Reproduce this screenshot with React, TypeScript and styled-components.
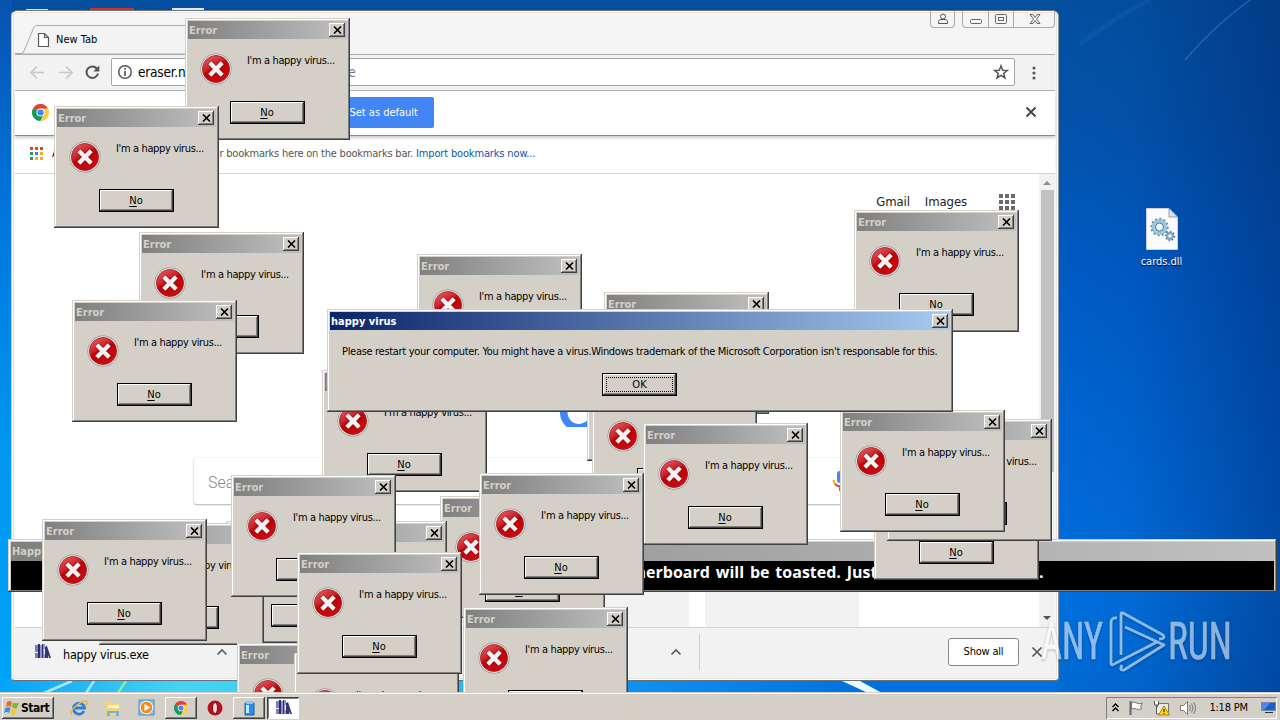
import React from 'react'
import styled, { createGlobalStyle } from 'styled-components'

const errors = [
    { x: 587, y: 339 },
    { x: 604, y: 292 },
    { x: 592, y: 385 },
    { x: 185, y: 18 },
    { x: 54, y: 106 },
    { x: 139, y: 232 },
    { x: 72, y: 300 },
    { x: 417, y: 254 },
    { x: 854, y: 210 },
    { x: 322, y: 370 },
    { x: 643, y: 423 },
    { x: 874, y: 458 },
    { x: 887, y: 419 },
    { x: 840, y: 410 },
    { x: 440, y: 496 },
    { x: 282, y: 521 },
    { x: 226, y: 521 },
    { x: 99, y: 523 },
    { x: 42, y: 519 },
    { x: 231, y: 475 },
    { x: 479, y: 473 },
    { x: 237, y: 643 },
    { x: 294, y: 653 },
    { x: 297, y: 552 },
    { x: 463, y: 607 },
]

const ErrorIcon = () => (
    <svg width="32" height="32" viewBox="0 0 32 32">
        <defs>
            <linearGradient id="red" x1="0" y1="0" x2="0.6" y2="1">
                <stop offset="0" stopColor="#e8696b" />
                <stop offset="0.45" stopColor="#cc2229" />
                <stop offset="0.55" stopColor="#bd0008" />
                <stop offset="1" stopColor="#c80d10" />
            </linearGradient>
        </defs>
        <circle cx="16" cy="16" r="15.5" fill="#8f8f8f" />
        <circle cx="16" cy="16" r="14.8" fill="#f1eeee" />
        <circle cx="16" cy="16" r="13.6" fill="url(#red)" stroke="#a3161a" strokeWidth="0.7" />
        <path d="M9.500 9.500l13 13M22.500 9.500l-13 13" stroke="#8c0a0e" strokeWidth="5.6" />
        <path d="M9.800 9.800l12.400 12.400M22.200 9.800l-12.400 12.400" stroke="#f3f1f1" strokeWidth="4.4" />
    </svg>
)

const CloseGlyph = () => (
    <svg width="9" height="8" viewBox="0 0 9 8">
        <path d="M1 0.500l7 7M8 0.500l-7 7" stroke="#000" strokeWidth="1.6" />
    </svg>
)

const ChromeLogo = ({ size }: { size: number }) => (
    <svg width={size} height={size} viewBox="0 0 18 18">
        <path d="M9 9L1.2 4.5A9 9 0 0 1 16.8 4.5Z" fill="#db4437" />
        <path d="M9 9L1.2 4.5A9 9 0 0 0 9 18L12.5 11Z" fill="#0f9d58" />
        <path d="M9 9L9 4.8H17A9 9 0 0 1 9 18L12.6 11Z" fill="#ffcd40" />
        <circle cx="9" cy="9" r="4.3" fill="#f5f5f5" />
        <circle cx="9" cy="9" r="3.3" fill="#4285f4" />
    </svg>
)

const VirusIcon = () => (
    <svg width="17" height="17" viewBox="0 0 17 17">
        <path d="M1 2h3v13H1z" fill="#7d80b8" />
        <path d="M4 1h2v14H4zM8 1h1v14H8z" fill="#2b2b70" />
        <path d="M6 2h2v13H6zM9 1h2v14H9z" fill="#9294c4" />
        <path d="M11 4l2-1 4 12h-2l-1-3v3h-3z" fill="#34347c" />
        <path d="M1 9h3v1H1zM10 6h1v5h-1z" fill="#fff" />
    </svg>
)

function ErrorDialog({ x, y }: { x: number; y: number }) {
    return (
        <Window style={{ left: x, top: y }}>
            <TitleBar>
                <span>Error</span>
                <CloseButton><CloseGlyph /></CloseButton>
            </TitleBar>
            <ErrorBody>
                <ErrorIcon />
                <Message>I'm a happy virus...</Message>
            </ErrorBody>
            <ButtonRow>
                <DialogButton><u>N</u>o</DialogButton>
            </ButtonRow>
        </Window>
    )
}

function Browser() {
    return (
        <BrowserFrame>
            <BrowserTop>
                <svg width="210" height="29" viewBox="0 0 210 29">
                    <path d="M0 28.5H6.500Q8 28.500 9 26L19 2Q20 0.500 22 0.500H210V29H0Z" fill="#f3f3f3" stroke="#a9abac" />
                    <path d="M23.500 8.500h6l4 4v9h-10zM29.500 8.500v4h4" fill="#fff" stroke="#5a5a5a" strokeWidth="1.200" />
                </svg>
                <TabTitle>New Tab</TabTitle>
                <Caption>
                    <CaptionBox>
                        <svg width="12" height="12" viewBox="0 0 12 12" fill="none" stroke="#555">
                            <circle cx="6" cy="3.500" r="2.500" />
                            <path d="M1.500 10.500V8.500Q2 6.500 4 6.500H8Q10 6.500 10.500 8.500V10.500Z" />
                        </svg>
                    </CaptionBox>
                    <CaptionGroup>
                        <svg width="92" height="17" viewBox="0 0 92 17" fill="none" stroke="#666">
                            <path d="M25.500 0V17M50.500 0V17" stroke="#aaa" />
                            <rect x="7.500" y="8.500" width="11" height="4" rx="1" />
                            <rect x="32.500" y="3.500" width="11" height="9" rx="1" />
                            <rect x="35.500" y="6.500" width="5" height="3" />
                            <path d="M67 3.500h3l2 3 2-3h3l-3.500 4.500 3.500 4.500h-3l-2-3-2 3h-3l3.500-4.500z" />
                        </svg>
                    </CaptionGroup>
                </Caption>
            </BrowserTop>
            <Toolbar>
                <svg width="96" height="36" viewBox="0 0 96 36" fill="none" stroke="#c8c8c8" strokeWidth="1.700">
                    <path d="M29 17.500H16.500M22 11.500l-6 6 6 6M44 17.500H56.500M51 11.500l6 6-6 6" />
                    <path d="M81.800 13.500A5.800 5.800 0 1 0 83 18.500" stroke="#555" strokeWidth="2" />
                    <path d="M84.300 10.500v6h-6z" fill="#555" stroke="none" />
                </svg>
                <Omnibox>
                    <svg width="16" height="16" viewBox="0 0 16 16">
                        <circle cx="8" cy="8" r="6.300" fill="none" stroke="#555" strokeWidth="1.500" />
                        <path d="M8 7v5M8 4v1.700" stroke="#555" strokeWidth="1.700" />
                    </svg>
                    <Url>eraser.n</Url>
                    <UrlTail>e</UrlTail>
                    <svg width="16" height="16" viewBox="0 0 16 16">
                        <path d="M8 1.800l1.700 4.400 4.700.2-3.700 3 1.300 4.600L8 11.400 4 14l1.300-4.600-3.700-3 4.700-.2z" fill="none" stroke="#555" strokeWidth="1.500" />
                    </svg>
                </Omnibox>
                <svg width="4" height="14" viewBox="0 0 4 14" fill="#5a5a5a">
                    <circle cx="2" cy="2" r="1.600" /><circle cx="2" cy="7" r="1.600" /><circle cx="2" cy="12" r="1.600" />
                </svg>
            </Toolbar>
            <InfoBar>
                <ChromeLogo size={17} />
                <DefaultButton>Set as default</DefaultButton>
                <svg width="12" height="12" viewBox="0 0 12 12"><path d="M1.500 1.500l9 9M10.500 1.500l-9 9" stroke="#444" strokeWidth="1.900" /></svg>
            </InfoBar>
            <BookmarkBar>
                <svg width="14" height="14" viewBox="0 0 14 14">
                    <path d="M0 0h3v3H0zM5 0h3v3H5zM10 0h3v3h-3z" fill="#e34133" />
                    <path d="M0 5h3v3H0z" fill="#2a9d54" /><path d="M5 5h3v3H5z" fill="#3b7ded" />
                    <path d="M10 5h3v3h-3zM5 10h3v3H5zM10 10h3v3h-3z" fill="#f0b01c" />
                    <path d="M0 10h3v3H0z" fill="#2a9d54" />
                </svg>
                <AppsLabel>Apps</AppsLabel>
                <BookmarkHint>place your bookmarks here on the bookmarks bar.</BookmarkHint>
                <BookmarkLink>Import bookmarks now...</BookmarkLink>
            </BookmarkBar>
            <Viewport>
                <PageArea>
                    <PageNav>
                        <span>Gmail</span>
                        <span>Images</span>
                        <svg width="16" height="16" viewBox="0 0 16 16" fill="#6b6b6b">
                            <path d="M0 0h4v4H0zM6 0h4v4H6zM12 0h4v4h-4zM0 6h4v4H0zM6 6h4v4H6zM12 6h4v4h-4zM0 12h4v4H0zM6 12h4v4H6zM12 12h4v4h-4z" />
                        </svg>
                    </PageNav>
                    <LogoRow>
                        <svg width="36" height="36" viewBox="0 0 36 36"><path d="M4 19A15 15 0 0 0 34 24" fill="none" stroke="#4285f4" strokeWidth="7.500" /></svg>
                    </LogoRow>
                    <SearchBox>
                        <span>Search</span>
                        <svg width="16" height="22" viewBox="0 0 16 22">
                            <rect x="5" y="1" width="6" height="12" rx="3" fill="#4285f4" />
                            <path d="M1.500 10A6.500 6.500 0 0 0 3 14" fill="none" stroke="#f4b400" strokeWidth="2" />
                            <path d="M3 14Q7 18 12 15" fill="none" stroke="#ea4335" strokeWidth="2" />
                            <path d="M8 17v4" stroke="#34a853" strokeWidth="2" />
                        </svg>
                    </SearchBox>
                    <Tiles><Tile /><Tile /></Tiles>
                </PageArea>
                <ScrollBar>
                    <svg width="14" height="16" viewBox="0 0 14 16"><path d="M3 11l4-4 4 4z" fill="#8e8e8e" /></svg>
                    <Thumb />
                    <svg width="14" height="16" viewBox="0 0 14 16"><path d="M3 5h8l-4 4z" fill="#505050" /></svg>
                </ScrollBar>
            </Viewport>
            <Shelf>
                <VirusIcon />
                <FileName>happy virus.exe</FileName>
                <svg width="12" height="8" viewBox="0 0 12 8"><path d="M1.500 6.500L6 2l4.500 4.500" fill="none" stroke="#5a5a5a" strokeWidth="1.700" /></svg>
                <ShelfItem>
                    <svg width="12" height="8" viewBox="0 0 12 8"><path d="M1.500 6.500L6 2l4.500 4.500" fill="none" stroke="#5a5a5a" strokeWidth="1.700" /></svg>
                </ShelfItem>
                <ShowAll>Show all</ShowAll>
                <svg width="12" height="12" viewBox="0 0 12 12"><path d="M1.500 1.500l9 9M10.500 1.500l-9 9" stroke="#555" strokeWidth="1.700" /></svg>
            </Shelf>
        </BrowserFrame>
    )
}

function Watermark() {
    return (
        <WatermarkBox>
            <svg width="200" height="66" viewBox="0 0 200 66">
                <g fill="#fff" stroke="#fff" strokeWidth="0.600" fontFamily="Roboto, sans-serif" fontSize="51">
                    <text x="3" y="50" textLength="62" lengthAdjust="spacingAndGlyphs">ANY</text>
                    <text x="130" y="50" textLength="64" lengthAdjust="spacingAndGlyphs">RUN</text>
                </g>
                <g fill="none" stroke="#fff" strokeWidth="2.800" strokeLinejoin="round">
                    <path d="M83 46V5Q83 3 85 4L125 26Q128 30 121 30" />
                    <path d="M79 9Q73 8 73 14V55Q74 57 78 54L119 33" />
                    <path d="M87 18L126 36L86 61Q81 62 84 56" />
                </g>
            </svg>
        </WatermarkBox>
    )
}

function Taskbar() {
    return (
        <TaskbarRow>
            <StartButton>
                <svg width="16" height="16" viewBox="0 0 16 16">
                    <path d="M3 2Q5 0 8 2L7 7Q4 5 2 7Z" fill="#ef6a2c" />
                    <path d="M9 2.500Q12 4 15 2.500L13 8Q11 9 8 7.500Z" fill="#7dba32" />
                    <path d="M1.500 8Q4 6.500 6.500 8L5 13Q3 11 0 13Z" fill="#3d8ede" />
                    <path d="M7.500 8.500Q10 10.500 13 9L11.500 14Q9 15.500 6 13.500Z" fill="#fbc62d" />
                </svg>
                <span>Start</span>
            </StartButton>
            <Task>
                <svg width="18" height="18" viewBox="0 0 18 18" fill="none">
                    <path d="M14 12A5.500 5.500 0 1 1 14.500 9H5" stroke="#2b7fd6" strokeWidth="2.800" />
                    <path d="M2 16Q-1 13 7 6Q15 0 17 3Q17.500 5 15 7" stroke="#e9b93b" strokeWidth="1.500" />
                </svg>
            </Task>
            <Task>
                <svg width="18" height="18" viewBox="0 0 18 18">
                    <path d="M2 3h6l1 2h7v11H2z" fill="#f0d67c" /><path d="M4 6h11v5H4z" fill="#fbf3c0" />
                    <path d="M1 9h15v3H1z" fill="#f0d67c" /><path d="M3 17v-5h12v5h-3v-3H6v3z" fill="#6db7e4" />
                </svg>
            </Task>
            <Task>
                <svg width="18" height="18" viewBox="0 0 18 18">
                    <path d="M1 1h15v15H1z" fill="#7cc3ec" stroke="#4b91c4" />
                    <circle cx="8.500" cy="8.500" r="6.300" fill="#f58a1f" stroke="#fff" /><path d="M6.500 5l6 3.500-6 3.500z" fill="#fff" />
                </svg>
            </Task>
            <Task $raised><ChromeLogo size={14} /></Task>
            <Task>
                <svg width="16" height="16" viewBox="0 0 16 16">
                    <circle cx="8" cy="8" r="7.500" fill="#b8101a" /><ellipse cx="8" cy="8" rx="2.500" ry="5.500" fill="#f7dede" stroke="#7e0610" />
                </svg>
            </Task>
            <Task $raised>
                <svg width="14" height="16" viewBox="0 0 14 16">
                    <path d="M3 3h9v12H3z" fill="#2b8fe6" stroke="#1c5fae" /><path d="M4 1h7v3H4z" fill="#8cc4f2" />
                    <path d="M4 5h3v8H4z" fill="#c6e7ff" />
                </svg>
            </Task>
            <Task $active><VirusIcon /></Task>
            <Tray>
                <svg width="9" height="11" viewBox="0 0 9 11" fill="none" stroke="#000" strokeWidth="1.400"><path d="M1.500 5l3-3 3 3M1.500 9l3-3 3 3" /></svg>
                <svg width="18" height="16" viewBox="0 0 18 16"><path d="M2.500 1v14" stroke="#666" strokeWidth="2" /><path d="M3.500 2.500q3-1 5 .5t6 0l-2 3 1 3q-3 1-5 0t-5 0z" fill="#fff" stroke="#777" /></svg>
                <svg width="18" height="16" viewBox="0 0 18 16"><path d="M4.500 3.500h11v9h-11z" fill="#e8e8e8" stroke="#777" /><path d="M1.500 1v4h4V1M3.500 5v9h4" fill="#fff" stroke="#555" /><path d="M11 6l5.500 9h-11z" fill="#ffd71c" stroke="#a88a00" /><path d="M11 9v3M11 13v1" stroke="#000" /></svg>
                <svg width="18" height="16" viewBox="0 0 18 16" fill="none" stroke="#777"><path d="M1.500 5.500h3l4-4v13l-4-4h-3z" fill="#fff" /><path d="M10.500 5q2 3 0 6M12.500 3.500q3 4.500 0 9M14.500 2q4 6 0 12" /></svg>
                <Clock>1:18 PM</Clock>
                <svg width="15" height="12" viewBox="0 0 15 12"><path d="M.5.500h14v8H.5z" fill="#1e5ec4" stroke="#6d87ad" /><path d="M1 1h8L3 8H1z" fill="#4b8be0" /><path d="M4 10.500h8" stroke="#333" /></svg>
            </Tray>
        </TaskbarRow>
    )
}

function App() {
    return (
        <Desktop>
            <GlobalStyle />
            <Wallpaper viewBox="0 0 1280 720">
                <defs>
                    <linearGradient id="glow" x1="0" y1="0" x2="1" y2="0">
                        <stop offset="0" stopColor="#06a3f8" />
                        <stop offset="0.17" stopColor="#46d3f2" />
                        <stop offset="0.38" stopColor="#35c8f4" />
                        <stop offset="0.52" stopColor="#149cf6" />
                        <stop offset="0.82" stopColor="#0070df" />
                    </linearGradient>
                </defs>
                <path d="M0 678H1060V700H0Z" fill="url(#glow)" />
                <path d="M44 693L72 681M86 693L94 681" stroke="#a8e8ff" strokeWidth="2.500" />
                <path d="M118 693L126 681" stroke="#8fe8a0" strokeWidth="2.500" />
                <path d="M842 681h18l22 12h-14z" fill="#e8faff" />
                <path d="M1185 60Q1215 25 1250 0" stroke="#4d8ac4" strokeWidth="1.500" fill="none" opacity="0.450" />
                <path d="M1080 44Q1120 14 1150 0" stroke="#4d8ac4" strokeWidth="5" fill="none" opacity="0.120" />
                <path d="M90 8h44v3H90z" fill="#d0322c" />
                <path d="M172 8h32v3h-32zM26 9h22v2H26z" fill="#dfe9f5" />
            </Wallpaper>
            <DesktopIcon>
                <svg width="32" height="42" viewBox="0 0 32 42">
                    <path d="M.5.500H23L31.500 9V41.500H.5Z" fill="#fbfbfb" stroke="#c9cfd6" />
                    <path d="M23 .5V9h8.500z" fill="#dde6ee" stroke="#6c7f92" strokeWidth="0.700" />
                    <circle cx="13.500" cy="19" r="6" fill="none" stroke="#9cc8dd" strokeWidth="4" />
                    <circle cx="13.500" cy="19" r="8.300" fill="none" stroke="#5f92ae" strokeWidth="1.800" strokeDasharray="2 2.300" />
                    <circle cx="13.500" cy="19" r="4" fill="#eef6fa" stroke="#54788c" />
                    <circle cx="24" cy="28" r="3" fill="#fff" stroke="#7aa9c2" strokeWidth="2.400" />
                    <circle cx="24" cy="28" r="4.600" fill="none" stroke="#4d7a94" strokeWidth="1.200" strokeDasharray="1.500 2" />
                </svg>
                <span>cards.dll</span>
            </DesktopIcon>
            <Browser />
            <BannerWindow>
                <TitleBar $banner><span>Happy virus</span></TitleBar>
                <BannerBody>
                    <BannerText>motherboard will be toasted. Just</BannerText>
                    <span>.</span>
                </BannerBody>
            </BannerWindow>
            {errors.map((e) => <ErrorDialog key={`${e.x}-${e.y}`} x={e.x} y={e.y} />)}
            <MainWindow>
                <TitleBar $active>
                    <span>happy virus</span>
                    <CloseButton><CloseGlyph /></CloseButton>
                </TitleBar>
                <MainMessage>Please restart your computer. You might have a virus.Windows trademark of the Microsoft Corporation isn't responsable for this.</MainMessage>
                <ButtonRow>
                    <DialogButton><Focus>OK</Focus></DialogButton>
                </ButtonRow>
            </MainWindow>
            <Watermark />
            <Taskbar />
        </Desktop>
    )
}

const GlobalStyle = createGlobalStyle`
    body { margin: 0; overflow: hidden; }
    * { box-sizing: border-box; }
    svg { display: block; flex: none; }
`;
const Desktop = styled.div`
    position: relative;
    width: 1280px;
    height: 720px;
    overflow: hidden;
    font-family: "DejaVu Sans Condensed", "DejaVu Sans", sans-serif;
    font-stretch: condensed;
    font-size: 11px;
    color: #000;
    white-space: nowrap;
    background:
        linear-gradient(90deg, rgba(0, 0, 0, 0) 1050px, rgba(0, 60, 140, 0.1) 1130px, rgba(0, 40, 110, 0.5) 1280px),
        linear-gradient(180deg, #044f9f 0, #0353ac 130px, #005cc6 280px, #0069d8 480px, #0070df 600px, #0068d0 720px);
`;
const Wallpaper = styled.svg`
    position: absolute;
    inset: 0;
    width: 1280px;
    height: 720px;
    background: linear-gradient(180deg, #0a52ae 0, #0074dc 200px, #0097f2 450px, #00a4fa 720px) 0 0 / 12px 720px no-repeat;
`;
const DesktopIcon = styled.div`
    position: absolute;
    left: 1121px;
    top: 208px;
    width: 81px;
    display: flex;
    flex-direction: column;
    align-items: center;
    gap: 5px;
    color: #fff;
    text-shadow: 0 1px 1px #003;
`;
const Window = styled.div`
    position: absolute;
    width: 165px;
    height: 122px;
    padding: 3px;
    background: #d4d0c8;
    box-shadow: inset -1px -1px #404040, inset 1px 1px #d4d0c8, inset -2px -2px #808080, inset 2px 2px #fff;
`;
const MainWindow = styled(Window)`
    left: 327px;
    top: 309px;
    width: 626px;
    height: 103px;
`;
const BannerWindow = styled(Window)`
    left: 8px;
    top: 539px;
    width: 1269px;
    height: 53px;
`;
const TitleBar = styled.div<{ $active?: boolean; $banner?: boolean }>`
    display: flex;
    align-items: center;
    justify-content: space-between;
    height: ${(p) => (p.$banner ? 19 : 18)}px;
    padding: 0 2px 0 1px;
    font-size: 11px;
    font-weight: bold;
    color: ${(p) => (p.$active ? '#fff' : '#d4d0c8')};
    background: ${(p) => (p.$active ? 'linear-gradient(90deg, #0a246a, #a6caf0)' : 'linear-gradient(90deg, #808080, #c0c0c0)')};
`;
const CloseButton = styled.div`
    display: flex;
    align-items: center;
    justify-content: center;
    width: 16px;
    height: 14px;
    background: #d4d0c8;
    box-shadow: inset -1px -1px #404040, inset 1px 1px #fff, inset -2px -2px #808080;
    svg { margin-top: -1px; }
`;
const ErrorBody = styled.div`
    display: flex;
    height: 62px;
    padding: 14px 0 0 12px;
    gap: 15px;
`;
const Message = styled.div`
    padding-top: 1px;
    line-height: 14px;
    letter-spacing: -0.36px;
`;
const ButtonRow = styled.div`
    display: flex;
    justify-content: center;
    padding-right: 1px;
`;
const DialogButton = styled.div`
    display: flex;
    align-items: center;
    justify-content: center;
    width: 75px;
    height: 23px;
    padding: 3px;
    border: 1px solid #000;
    box-shadow: inset -1px -1px #404040, inset 1px 1px #fff, inset -2px -2px #808080;
    u { text-underline-offset: 2px; }
`;
const Focus = styled.div`
    width: 100%;
    height: 100%;
    border: 1px dotted #000;
    text-align: center;
    line-height: 13px;
`;
const MainMessage = styled.div`
    height: 43px;
    padding: 15px 0 0 12px;
    line-height: 14px;
    letter-spacing: -0.31px;
`;
const BannerBody = styled.div`
    display: flex;
    height: 29px;
    padding-left: 592px;
    background: #000;
    color: #fff;
    font: bold 16px/22px "Open Sans", sans-serif;
    word-spacing: 1.7px;
`;
const BannerText = styled.div`
    width: 436px;
`;
const BrowserFrame = styled.div`
    position: absolute;
    z-index: 0;
    left: 11px;
    top: 10px;
    width: 1048px;
    height: 671px;
    display: flex;
    flex-direction: column;
    padding: 0 3px 2px;
    background: #f5f5f5;
    border: 1px solid #8d9298;
    border-color: #6b6f78 #8d9298 #6a6f75 #c9cdd2;
    border-radius: 6px 6px 4px 4px;
    box-shadow: inset 0 0 0 1px #fff, inset 0 0 0 2px #e4e4e4;
`;
const BrowserTop = styled.div`
    display: flex;
    align-items: flex-end;
    height: 43px;
`;
const TabTitle = styled.div`
    width: 60px;
    margin-left: -169px;
    line-height: 29px;
`;
const Caption = styled.div`
    display: flex;
    gap: 7px;
    margin-left: auto;
    align-self: flex-start;
`;
const CaptionBox = styled.div`
    display: flex;
    align-items: center;
    justify-content: center;
    width: 25px;
    height: 17px;
    border: 1px solid #aaa;
    border-top: 0;
    border-radius: 0 0 4px 4px;
`;
const CaptionGroup = styled.div`
    width: 93px;
    height: 17px;
    overflow: hidden;
    border: 1px solid #aaa;
    border-top: 0;
    border-radius: 0 0 4px 4px;
`;
const Toolbar = styled.div`
    display: flex;
    align-items: center;
    height: 37px;
    border: 1px solid #a9abac;
    border-width: 1px 0;
    background: #f2f2f2;
    > svg:last-child { margin-left: 17px; }
`;
const Omnibox = styled.div`
    display: flex;
    align-items: center;
    width: 904px;
    height: 28px;
    margin-top: -1px;
    padding: 0 5px;
    background: #fff;
    border: 1px solid #a5a7a9;
    border-radius: 2px;
    font-size: 14px;
`;
const Url = styled.div`
    width: 210px;
    margin-left: 5px;
    font-size: 13.5px;
    letter-spacing: -0.2px;
`;
const UrlTail = styled.div`
    flex: 1;
    color: #777;
`;
const InfoBar = styled.div`
    display: flex;
    align-items: center;
    height: 45px;
    padding: 0 18px 2px 17px;
    background: #fff;
    border-bottom: 1px solid #8b8b8b;
    box-shadow: 0 2px 3px #ccc;
    z-index: 1;
    svg:last-child { margin-left: auto; }
`;
const DefaultButton = styled.div`
    width: 104px;
    height: 31px;
    margin-left: 281px;
    padding-right: 16px;
    border-radius: 2px;
    background: #4285f4;
    color: #fff;
    line-height: 31px;
    text-align: right;
`;
const BookmarkBar = styled.div`
    display: flex;
    align-items: center;
    height: 38px;
    padding: 0 0 2px 15px;
    background: #fff;
    border-bottom: 1px solid #d4d4d4;
    color: #555;
`;
const AppsLabel = styled.div`
    width: 30px;
    margin-left: 8px;
    color: #000;
`;
const BookmarkHint = styled.div`
    display: flex;
    justify-content: flex-end;
    width: 331px;
    letter-spacing: -0.22px;
`;
const BookmarkLink = styled.div`
    margin-left: 3px;
    color: #1155aa;
    letter-spacing: -0.15px;
`;
const Viewport = styled.div`
    display: flex;
    flex: 1;
    background: #fff;
`;
const PageArea = styled.div`
    display: flex;
    flex-direction: column;
    flex: 1;
`;
const PageNav = styled.div`
    display: flex;
    align-items: center;
    justify-content: flex-end;
    gap: 15px;
    height: 56px;
    padding-right: 24px;
    font-size: 13px;
    letter-spacing: -0.1px;
    color: #222;
    span { margin-top: -2px; }
    svg { margin-left: 17px; }
`;
const LogoRow = styled.div`
    height: 228px;
    padding: 161px 0 0 545px;
`;
const SearchBox = styled.div`
    display: flex;
    align-items: center;
    justify-content: space-between;
    width: 654px;
    height: 46px;
    margin-left: 179px;
    padding: 0 0 0 14px;
    border-radius: 2px;
    box-shadow: 0 1px 2px rgba(0, 0, 0, 0.3), 0 0 1px rgba(0, 0, 0, 0.2);
    font: 300 16px Roboto, sans-serif;
    color: #888;
    span { padding-top: 2px; }
`;
const Tiles = styled.div`
    display: flex;
    gap: 16px;
    height: 70px;
    margin: auto 0 0 520px;
`;
const Tile = styled.div`
    width: 154px;
    background: #f2f2f2;
`;
const ScrollBar = styled.div`
    display: flex;
    flex-direction: column;
    align-items: center;
    width: 16px;
    background: #f1f1f1;
`;
const Thumb = styled.div`
    width: 13px;
    height: 282px;
    margin-bottom: auto;
    background: #c1c1c1;
`;
const Shelf = styled.div`
    display: flex;
    align-items: center;
    height: 51px;
    padding: 0 12px 3px 19px;
    border-top: 1px solid #d0d0d0;
    background: #f2f2f2;
`;
const FileName = styled.div`
    width: 153px;
    margin-left: 12px;
    padding-top: 5px;
    font-size: 12.5px;
    letter-spacing: -0.25px;
`;
const ShelfItem = styled.div`
    display: flex;
    align-items: center;
    justify-content: flex-end;
    width: 472px;
    height: 36px;
    padding-right: 17px;
    border-right: 1px solid #ccc;
`;
const ShowAll = styled.div`
    width: 71px;
    height: 28px;
    margin: 0 12px 0 auto;
    border: 1px solid #888;
    border-radius: 3px;
    background: #fff;
    line-height: 26px;
    text-align: center;
    letter-spacing: -0.2px;
`;
const WatermarkBox = styled.div`
    position: absolute;
    left: 1038px;
    top: 609px;
    opacity: 0.55;
    filter: drop-shadow(0 1px 1px rgba(0, 0, 0, 0.5));
`;
const TaskbarRow = styled.div`
    position: absolute;
    left: 0;
    right: 0;
    bottom: 0;
    display: flex;
    align-items: center;
    height: 28px;
    padding: 3px 3px 0 2px;
    background: #d4d0c8;
    box-shadow: inset 0 1px #d4d0c8, inset 0 2px #fff;
`;
const StartButton = styled.div`
    display: flex;
    align-items: center;
    gap: 1px;
    width: 52px;
    height: 22px;
    margin-right: 9px;
    padding-left: 2px;
    font-size: 12px;
    font-weight: bold;
    letter-spacing: -0.5px;
    box-shadow: inset -1px -1px #404040, inset 1px 1px #fff, inset -2px -2px #808080;
`;
const Task = styled.div<{ $raised?: boolean; $active?: boolean }>`
    display: flex;
    align-items: center;
    justify-content: center;
    width: 32px;
    height: 22px;
    margin-right: 2px;
    background: ${(p) => (p.$active ? '#fff' : 'transparent')};
    box-shadow: ${(p) => (p.$raised ? 'inset -1px -1px #404040, inset 1px 1px #fff, inset -2px -2px #808080' : p.$active ? 'inset 1px 1px #404040, inset -1px -1px #fff, inset 2px 2px #808080' : 'none')};
`;
const Tray = styled.div`
    display: flex;
    align-items: center;
    justify-content: space-between;
    width: 171px;
    height: 22px;
    margin-left: auto;
    padding: 0 1px 0 5px;
    box-shadow: inset 1px 1px #808080, inset -1px -1px #fff;
`;
const Clock = styled.div`
    width: 41px;
    margin: 0 3px 0 5px;
    letter-spacing: -0.2px;
`;

export default App
